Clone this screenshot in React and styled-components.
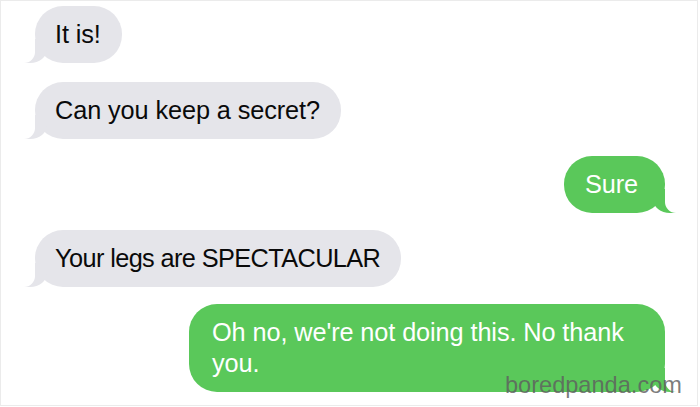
import React from "react";
import styled, { createGlobalStyle, css } from "styled-components";

const Global = createGlobalStyle`
  html, body { margin: 0; padding: 0; background: #fff; }
  body { font-family: "Liberation Sans", Arial, sans-serif; }
`;

const Frame = styled.div`
  position: relative;
  box-sizing: border-box;
  width: 698px;
  height: 406px;
  border: 1px solid #ebebeb;
  background: #fff;
  overflow: hidden;
  display: flex;
  flex-direction: column;
  gap: 17px;
  padding: 5px 32px 0 34px;
`;

const Row = styled.div`
  display: flex;
  justify-content: ${(p) => (p.$sent ? "flex-end" : "flex-start")};
  margin-top: ${(p) => p.$mt || 0}px;
`;

const GRAY = "#e5e5ea";
const GREEN = "#5ac85a";

const Bubble = styled.div`
  position: relative;
  box-sizing: border-box;
  max-width: ${(p) => p.$max || 480}px;
  padding: 13px ${(p) => p.$pr || 21}px 13px ${(p) => p.$pl || 20}px;
  border-radius: 28px;
  font-family: "Liberation Sans", Arial, sans-serif;
  font-size: 25.3px;
  line-height: 31px;
  letter-spacing: ${(p) => (p.$ls != null ? p.$ls : -0.1)}px;
  background: ${(p) => (p.$sent ? GREEN : GRAY)};
  color: ${(p) => (p.$sent ? "#fff" : "#0a0a0a")};
  z-index: 0;

  &::before,
  &::after {
    content: "";
    position: absolute;
    bottom: 0;
    height: 24px;
    z-index: -1;
  }

  ${(p) =>
    p.$sent
      ? css`
          &::before {
            right: -11px;
            width: 23px;
            background: ${GREEN};
            border-bottom-left-radius: 17px 14px;
          }
          &::after {
            right: -26px;
            width: 26px;
            background: #fff;
            border-bottom-left-radius: 11px;
          }
        `
      : css`
          &::before {
            left: -11px;
            width: 23px;
            background: ${GRAY};
            border-bottom-right-radius: 17px 14px;
          }
          &::after {
            left: -26px;
            width: 26px;
            background: #fff;
            border-bottom-right-radius: 11px;
          }
        `}
`;

const Watermark = styled.div`
  position: absolute;
  right: 15px;
  bottom: 6px;
  font-family: "Liberation Sans", Arial, sans-serif;
  font-size: 23.6px;
  line-height: 28px;
  color: rgba(95, 95, 95, 0.82);
  z-index: 2;
`;

const messages = [
  { text: "It is!", sent: false },
  { text: "Can you keep a secret?", sent: false, mt: 2 },
  { text: "Sure", sent: true, pl: 21, pr: 27 },
  { text: "Your legs are SPECTACULAR", sent: false, ls: -0.6 },
  { text: "Oh no, we're not doing this. No thank you.", sent: true, pl: 23, max: 476 },
];

export default function App() {
  return (
    <>
      <Global />
      <Frame>
        {messages.map((m, i) => (
          <Row key={i} $sent={m.sent} $mt={m.mt}>
            <Bubble $sent={m.sent} $pl={m.pl} $pr={m.pr} $max={m.max} $ls={m.ls}>
              {m.text}
            </Bubble>
          </Row>
        ))}
        <Watermark>boredpanda.com</Watermark>
      </Frame>
    </>
  );
}
